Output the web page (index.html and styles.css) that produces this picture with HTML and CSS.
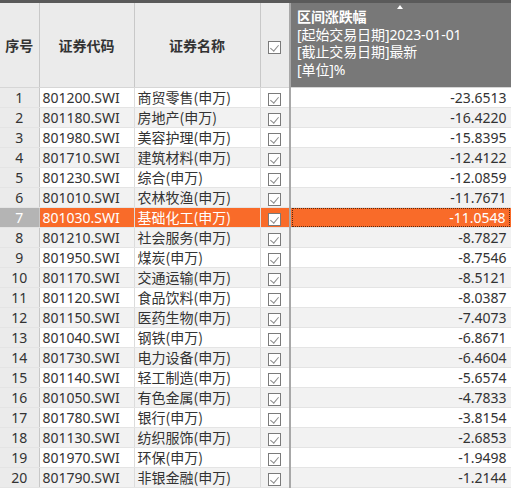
FILE: index.html
```html
<!DOCTYPE html>
<html>
<head>
<meta charset="utf-8">
<link rel="stylesheet" href="styles.css">
</head>
<body>
<div class="grid">
<span class="sort"></span>
<table class="tbl">
<colgroup>
<col class="c-idx"><col class="c-code"><col class="c-name"><col class="c-chk"><col class="c-val">
</colgroup>
<thead>
<tr>
<th class="h">序号</th>
<th class="h">证券代码</th>
<th class="h">证券名称</th>
<th class="h hchk"><span class="box"></span></th>
<th class="hval"><b>区间涨跌幅</b><br>[起始交易日期]2023-01-01<br>[截止交易日期]最新<br>[单位]%</th>
</tr>
</thead>
<tbody id="rows"></tbody>
</table>
</div>
<script src="app.js"></script>
</body>
</html>
```
FILE: app.js
```js
var data = [
["801200.SWI","商贸零售(申万)","-23.6513"],
["801180.SWI","房地产(申万)","-16.4220"],
["801980.SWI","美容护理(申万)","-15.8395"],
["801710.SWI","建筑材料(申万)","-12.4122"],
["801230.SWI","综合(申万)","-12.0859"],
["801010.SWI","农林牧渔(申万)","-11.7671"],
["801030.SWI","基础化工(申万)","-11.0548"],
["801210.SWI","社会服务(申万)","-8.7827"],
["801950.SWI","煤炭(申万)","-8.7546"],
["801170.SWI","交通运输(申万)","-8.5121"],
["801120.SWI","食品饮料(申万)","-8.0387"],
["801150.SWI","医药生物(申万)","-7.4073"],
["801040.SWI","钢铁(申万)","-6.8671"],
["801730.SWI","电力设备(申万)","-6.4604"],
["801140.SWI","轻工制造(申万)","-5.6574"],
["801050.SWI","有色金属(申万)","-4.7833"],
["801780.SWI","银行(申万)","-3.8154"],
["801130.SWI","纺织服饰(申万)","-2.6853"],
["801970.SWI","环保(申万)","-1.9498"],
["801790.SWI","非银金融(申万)","-1.2144"]
];
var html = "";
data.forEach(function (r, i) {
  var n = i + 1;
  var cls = n === 7 ? "sel" : (n % 2 === 0 ? "even" : "odd");
  html += '<tr class="' + cls + '"><td class="idx">' + n + '</td><td class="code">' + r[0] +
    '</td><td class="name">' + r[1] + '</td><td class="chk"><span class="box"></span></td><td class="val"><span class="vin">' +
    r[2] + '</span></td></tr>';
});
document.getElementById("rows").innerHTML = html;
```
FILE: styles.css
```css
html, body {
  margin: 0;
  padding: 0;
  background: #ffffff;
}
.grid {
  position: relative;
  width: 511px;
  height: 488px;
  overflow: hidden;
  border-top: 3px solid #5a5a5a;
  box-sizing: border-box;
  background: #ebebeb;
}
.tbl {
  border-collapse: collapse;
  table-layout: fixed;
  width: 511px;
  font-family: "Noto Sans", "Noto Sans CJK SC", sans-serif;
  font-size: 14px;
  color: #333333;
}
.c-idx { width: 39px; }
.c-code { width: 95px; }
.c-name { width: 126px; }
.c-chk { width: 30px; }
.c-val { width: 221px; }
.h {
  height: 84px;
  padding: 0;
  background: #ebebeb;
  border-right: 1px solid #c8c8c8;
  border-bottom: 1px solid #d6d6d6;
  font-weight: bold;
  font-size: 14px;
  color: #333;
  text-align: center;
  vertical-align: middle;
  font-family: "Noto Sans CJK SC", sans-serif;
}
.hchk {
  border-right: 2px solid #a8a8a8;
}
.hval {
  padding: 5px 0 0 6px;
  background: #787878;
  color: #ffffff;
  text-align: left;
  vertical-align: top;
  font-weight: normal;
  font-size: 14px;
  line-height: 17.5px;
  letter-spacing: -0.1px;
  font-family: "Noto Sans", "Noto Sans CJK SC", sans-serif;
  border-bottom: 1px solid #d6d6d6;
}
.hval b {
  font-weight: bold;
  font-family: "Noto Sans CJK SC", sans-serif;
}
.sort {
  position: absolute;
  z-index: 2;
  top: 2px;
  left: 397px;
  width: 0;
  height: 0;
  border-left: 3px solid transparent;
  border-right: 3px solid transparent;
  border-bottom: 4px solid #ffffff;
}
.box {
  display: inline-block;
  box-sizing: border-box;
  width: 13px;
  height: 13px;
  border: 1px solid #7a7a7a;
  background: #ffffff;
  position: relative;
  vertical-align: middle;
}
.box::after {
  content: "";
  position: absolute;
  left: 3px;
  top: 1px;
  width: 4px;
  height: 7px;
  border-right: 1px solid #8a8a8a;
  border-bottom: 1px solid #8a8a8a;
  transform: rotate(40deg);
}
tbody td {
  height: 19px;
  padding: 0;
  border-bottom: 1px solid #e4e4e4;
  border-right: 1px solid #dcdcdc;
  white-space: nowrap;
  overflow: hidden;
  line-height: 19px;
}
.idx {
  background: #ebebeb;
  text-align: center;
  border-right: 1px solid #c8c8c8;
}
.code { padding-left: 3px; }
.name {
  padding-left: 3px;
  font-family: "Noto Sans CJK SC", sans-serif;
  font-size: 14px;
}
.chk {
  text-align: center;
  border-right: 2px solid #a8a8a8;
}
.val {
  text-align: right;
  padding-right: 4px;
}
.odd td.code, .odd td.name, .odd td.chk, .odd td.val { background: #ffffff; }
.even td.code, .even td.name, .even td.chk, .even td.val { background: #f2f2f2; }
.sel td { background: #f96b29; color: #ffffff; }
.sel td.idx { background: #b4b4b4; color: #ffffff; }
.sel td.val {
  padding: 0;
}
.sel .vin {
  display: block;
  margin: 0 1px 0 1px;
  height: 17px;
  line-height: 17px;
  padding-right: 3px;
  border: 1px dotted #5a2a10;
}
```
